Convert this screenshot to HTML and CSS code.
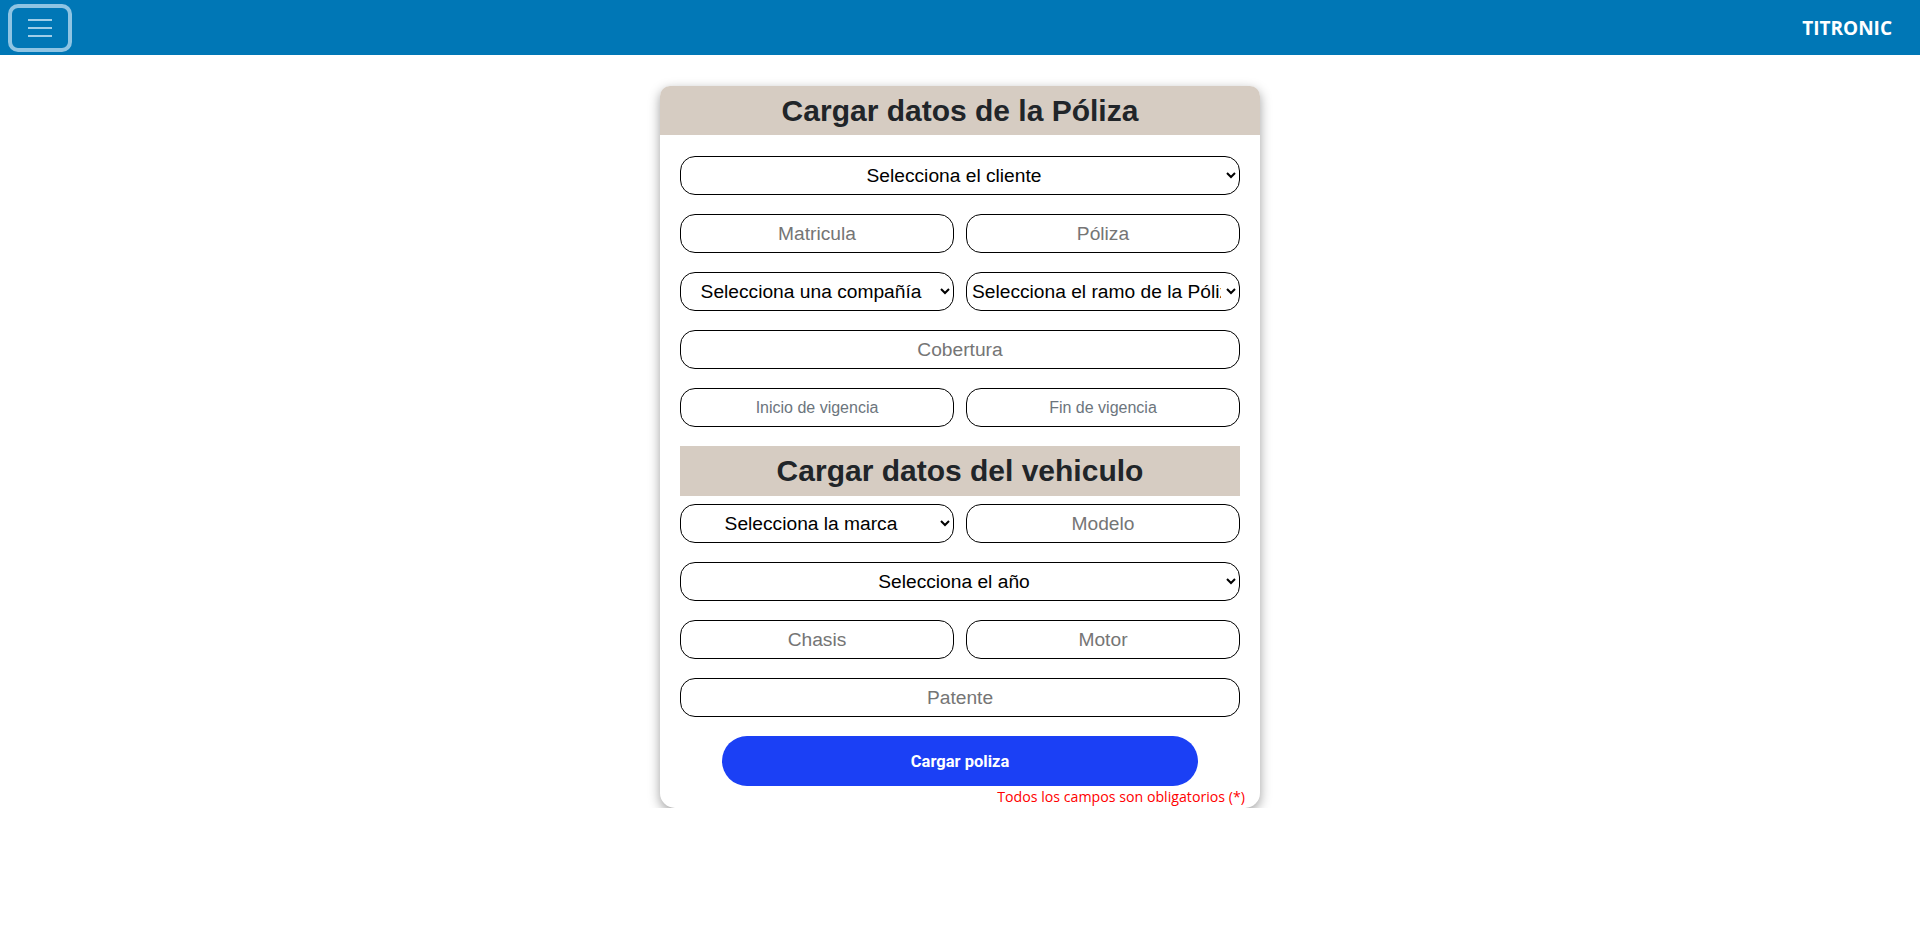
FILE: index.html
```html
<!DOCTYPE html>
<html lang="es">
<head>
<meta charset="utf-8">
<title>Cargar datos de la Póliza</title>
<link rel="stylesheet" href="styles.css">
</head>
<body>
<header class="navbar">
  <button class="toggler" type="button" aria-label="Menu">
    <span class="bar"></span><span class="bar"></span><span class="bar"></span>
  </button>
  <span class="brand">TITRONIC</span>
</header>
<main class="page">
  <section class="card">
    <h2 class="band">Cargar datos de la Póliza</h2>
    <form class="form">
      <select class="field"><option>Selecciona el cliente</option></select>
      <div class="row">
        <input class="field" type="text" placeholder="Matricula">
        <input class="field" type="text" placeholder="Póliza">
      </div>
      <div class="row">
        <select class="field"><option>Selecciona una compañía</option></select>
        <select class="field field-start"><option>Selecciona el ramo de la Póliza</option></select>
      </div>
      <input class="field" type="text" placeholder="Cobertura">
      <div class="row">
        <input class="field small" type="text" placeholder="Inicio de vigencia">
        <input class="field small" type="text" placeholder="Fin de vigencia">
      </div>
      <h2 class="band band-inner">Cargar datos del vehiculo</h2>
      <div class="row">
        <select class="field"><option>Selecciona la marca</option></select>
        <input class="field" type="text" placeholder="Modelo">
      </div>
      <select class="field"><option>Selecciona el año</option></select>
      <div class="row">
        <input class="field" type="text" placeholder="Chasis">
        <input class="field" type="text" placeholder="Motor">
      </div>
      <input class="field" type="text" placeholder="Patente">
      <button class="submit" type="button">Cargar poliza</button>
      <p class="note">Todos los campos son obligatorios (*)</p>
    </form>
  </section>
</main>
</body>
</html>
```
FILE: styles.css
```css
* { box-sizing: border-box; }

body {
  margin: 0;
  font-family: "Liberation Sans", Arial, sans-serif;
  background: #ffffff;
}

.navbar {
  height: 55px;
  background: #0077b6;
  display: flex;
  align-items: center;
  justify-content: space-between;
  padding: 0 28px 0 8px;
}

.toggler {
  width: 64px;
  height: 48px;
  margin-top: 1px;
  border: 4px solid rgba(190, 222, 242, 0.75);
  border-radius: 10px;
  background: transparent;
  display: flex;
  flex-direction: column;
  align-items: center;
  justify-content: center;
  gap: 6px;
  padding: 0;
}

.bar {
  display: block;
  width: 24px;
  height: 2px;
  background: rgba(200, 228, 245, 0.8);
}

.brand {
  color: #ffffff;
  font-family: "Open Sans", sans-serif;
  font-weight: 700;
  font-size: 19px;
}

.page {
  display: flex;
  justify-content: center;
  padding-top: 31px;
}

.card {
  width: 600px;
  background: #ffffff;
  border-radius: 10px 10px 15px 15px;
  box-shadow: 0 4px 12px rgba(0, 0, 0, 0.38);
  overflow: hidden;
}

.band {
  margin: 0;
  height: 49px;
  line-height: 49px;
  background: #d6ccc2;
  color: #212529;
  font-size: 30px;
  font-weight: 700;
  text-align: center;
}

.band-inner {
  height: 50px;
  line-height: 50px;
  margin-bottom: 8px;
}

.form {
  padding: 21px 20px 0;
  margin: 0;
  display: flex;
  flex-direction: column;
}

.field {
  display: block;
  width: 100%;
  height: 39px;
  margin: 0 0 19px;
  border: 1px solid #000000;
  border-radius: 15px;
  background: #ffffff;
  color: #000000;
  font-family: "Liberation Sans", Arial, sans-serif;
  font-size: 19.2px;
  text-align: center;
  text-align-last: center;
  padding: 0 2px;
  outline: none;
}

.field::placeholder {
  color: #757575;
}

.field.small {
  font-size: 16px;
}

.field.small::placeholder {
  color: #6c757d;
}

.field-start {
  padding-left: 1px;
}

.row {
  display: grid;
  grid-template-columns: 1fr 1fr;
  column-gap: 12px;
}

.submit {
  align-self: center;
  width: 476px;
  height: 50px;
  border: none;
  border-radius: 25px;
  background: #1b40f5;
  color: #ffffff;
  font-family: Roboto, sans-serif;
  font-weight: 700;
  font-size: 16.5px;
}

.note {
  margin: 0 -5px 0 0;
  height: 22px;
  line-height: 22px;
  text-align: right;
  color: #ff0000;
  font-family: "Open Sans", sans-serif;
  font-size: 14.2px;
}
```
